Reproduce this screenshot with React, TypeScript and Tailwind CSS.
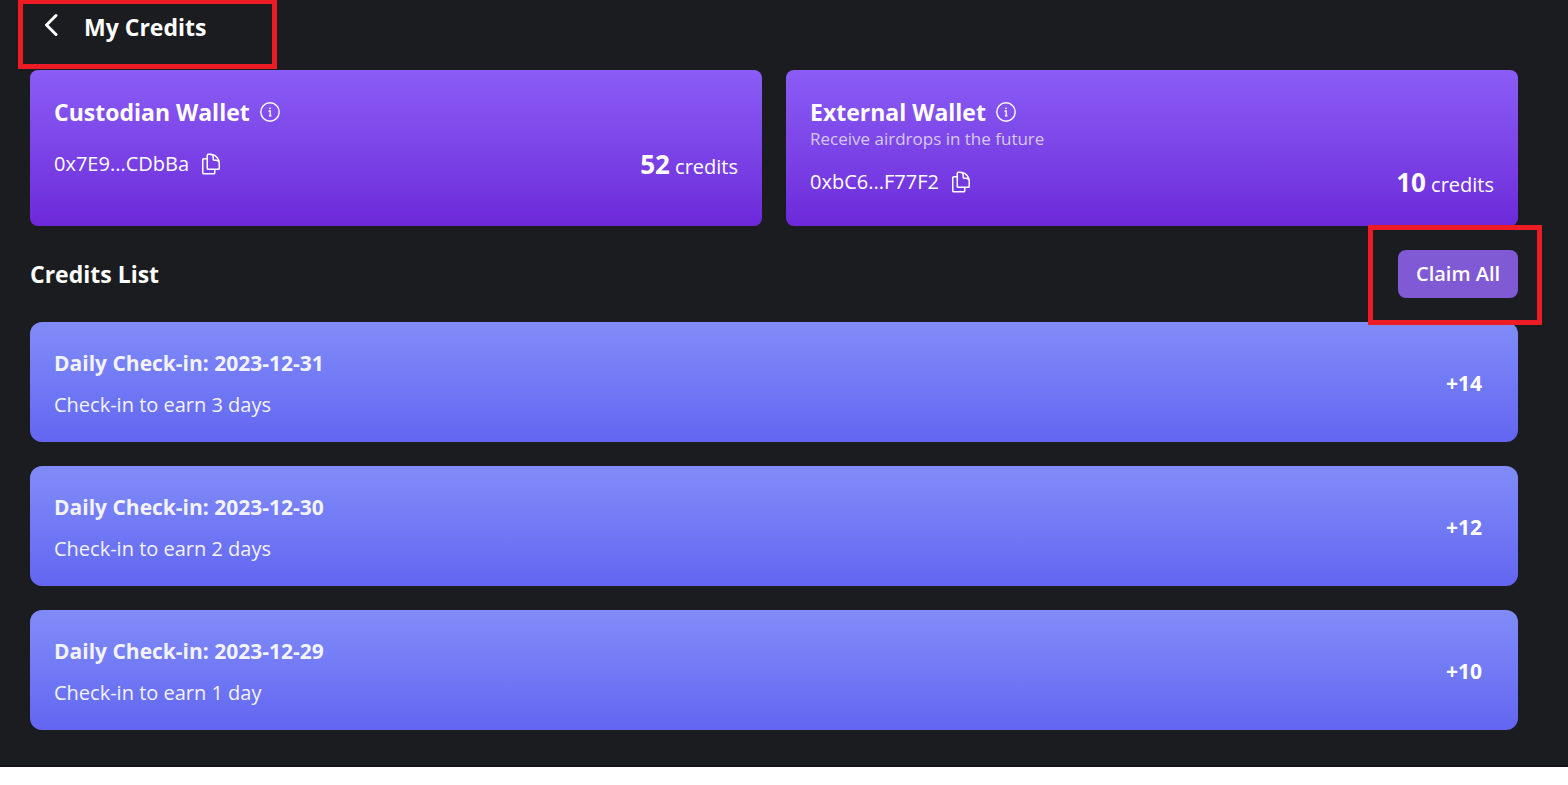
import { HiOutlineDocumentDuplicate } from "react-icons/hi2";

type Wallet = {
    name: string;
    note?: string;
    address: string;
    credits: number;
};

type CreditEntry = {
    date: string;
    description: string;
    amount: number;
};

const wallets: Wallet[] = [
    { name: "Custodian Wallet", address: "0x7E9...CDbBa", credits: 52 },
    {
        name: "External Wallet",
        note: "Receive airdrops in the future",
        address: "0xbC6...F77F2",
        credits: 10,
    },
];

const entries: CreditEntry[] = [
    {
        date: "2023-12-31",
        description: "Check-in to earn 3 days",
        amount: 14,
    },
    {
        date: "2023-12-30",
        description: "Check-in to earn 2 days",
        amount: 12,
    },
    { date: "2023-12-29", description: "Check-in to earn 1 day", amount: 10 },
];

function BackIcon() {
    return (
        <svg
            viewBox="0 0 14 24"
            className="h-6 w-3.5"
            fill="none"
            stroke="currentColor"
            strokeWidth="3"
            strokeLinecap="round"
            strokeLinejoin="round"
        >
            <path d="M12 2.500 2.500 12l9.500 9.500" />
        </svg>
    );
}

function InfoIcon() {
    return (
        <svg viewBox="0 0 20 20" className="h-5 w-5" fill="none">
            <circle
                cx="10"
                cy="10"
                r="9.200"
                stroke="currentColor"
                strokeWidth="1.400"
            />
            <circle cx="10" cy="6.300" r="0.900" fill="currentColor" />
            <path
                d="M8.500 9h1.700v4.600M8.900 13.800h2.600"
                stroke="currentColor"
                strokeWidth="1.300"
            />
        </svg>
    );
}

function WalletCard({ wallet }: { wallet: Wallet }) {
    return (
        <section className="rounded-lg bg-linear-to-b from-[#8b5cf6] to-[#6d28d9] p-6">
            <div className="flex h-9 items-center gap-2.5">
                <h2 className="text-[23px] font-bold">{wallet.name}</h2>
                <button type="button" aria-label={`About ${wallet.name}`}>
                    <InfoIcon />
                </button>
            </div>
            {wallet.note && (
                <p className="text-[17px] leading-[18px] text-[#d6c8f2]">
                    {wallet.note}
                </p>
            )}
            <div className="mt-4 flex h-[38px] items-start justify-between leading-9">
                <div className="flex h-9 items-center gap-2.5">
                    <span className="text-[20px]">{wallet.address}</span>
                    <button type="button" aria-label="Copy address">
                        <HiOutlineDocumentDuplicate className="h-6 w-6" />
                    </button>
                </div>
                <p className="text-[20px]">
                    <span className="text-[26px] font-bold">
                        {wallet.credits}
                    </span>{" "}
                    credits
                </p>
            </div>
        </section>
    );
}

function CreditRow({ entry }: { entry: CreditEntry }) {
    return (
        <li className="flex items-center justify-between rounded-xl bg-linear-to-b from-[#818cf8] to-[#6366f1] pt-[26px] pr-9 pb-[22px] pl-6">
            <div className="space-y-3 leading-[30px] text-[#f3f3fd]">
                <h3 className="text-[21px] font-bold">
                    Daily Check-in: {entry.date}
                </h3>
                <p className="text-[20px]">{entry.description}</p>
            </div>
            <span className="text-[21px] font-bold">+{entry.amount}</span>
        </li>
    );
}

export default function App() {
    return (
        <div className="bg-white font-['Open_Sans','Noto_Sans',sans-serif] text-white">
            <main className="border-b-2 border-[#17131a] bg-[#1b1c1f] pr-[50px] pb-[35px] pl-[30px]">
                <header className="relative flex h-[54px] items-center gap-[26px] pl-3.5">
                    <button type="button" aria-label="Back" className="pb-1">
                        <BackIcon />
                    </button>
                    <h1 className="text-[23px] font-bold">My Credits</h1>
                    <span className="pointer-events-none absolute -top-px -left-3 h-[70px] w-[259px] border-5 border-[#ed1c24]" />
                </header>

                <div className="mt-4 grid grid-cols-2 gap-6">
                    {wallets.map((wallet) => (
                        <WalletCard key={wallet.name} wallet={wallet} />
                    ))}
                </div>

                <div className="my-6 flex items-center justify-between">
                    <h2 className="text-[23px] font-bold">Credits List</h2>
                    <div className="relative">
                        <button
                            type="button"
                            className="h-12 w-[120px] rounded-lg bg-[#805ad5] text-[20px] font-semibold"
                        >
                            Claim All
                        </button>
                        <span className="pointer-events-none absolute -top-[25px] -right-6 -bottom-[27px] -left-[30px] z-10 border-5 border-[#ed1c24]" />
                    </div>
                </div>

                <ul className="space-y-6">
                    {entries.map((entry) => (
                        <CreditRow key={entry.date} entry={entry} />
                    ))}
                </ul>
            </main>
        </div>
    );
}
